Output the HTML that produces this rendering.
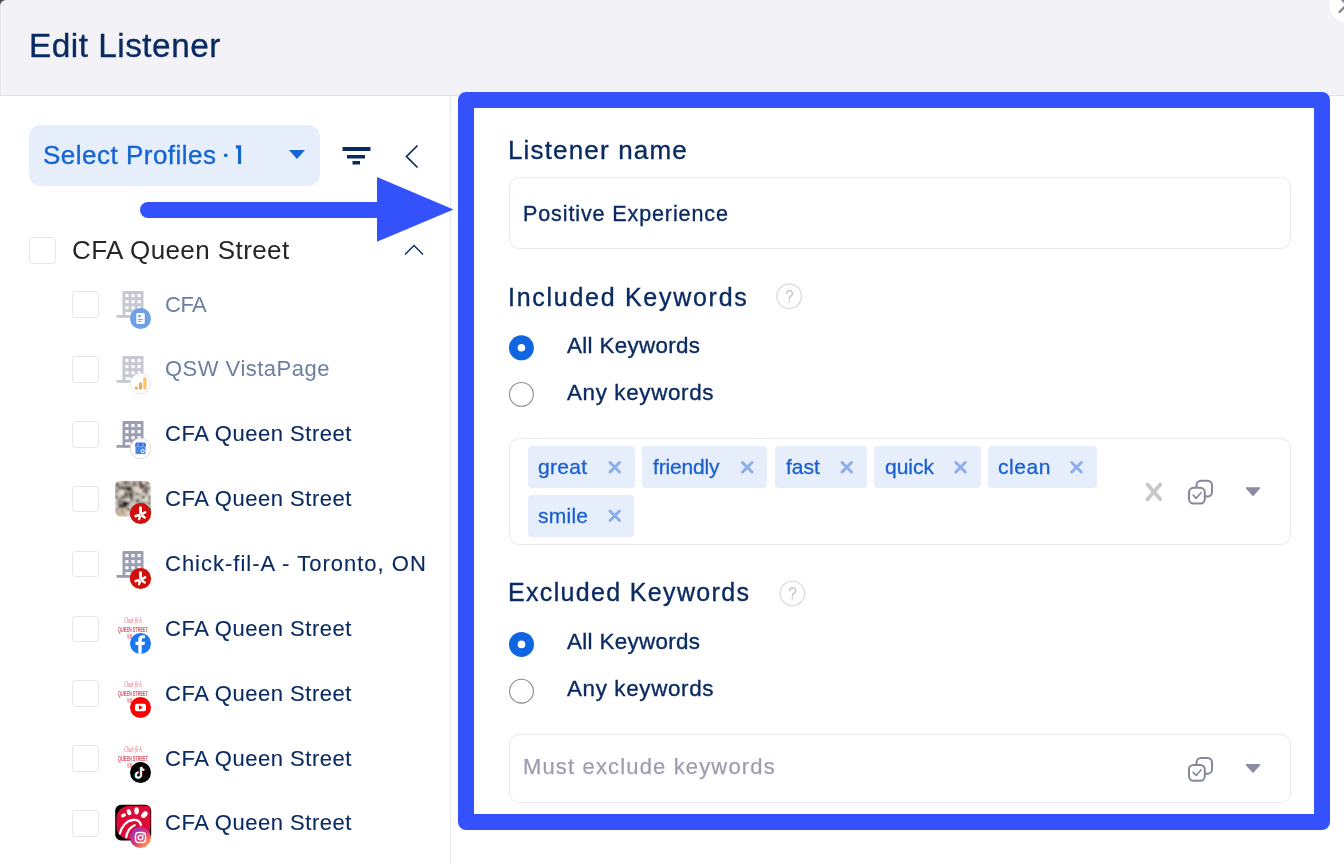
<!DOCTYPE html>
<html><head><meta charset="utf-8">
<style>
html,body{margin:0;padding:0;}
body{width:1344px;height:864px;position:relative;overflow:hidden;background:#fff;font-family:"Liberation Sans",sans-serif;}
.a{position:absolute;}
.t{position:absolute;white-space:nowrap;line-height:1;will-change:transform;}
.navy{color:#0a2b62;-webkit-text-stroke:0.35px #0a2b62;}
#hdr{left:0;top:0;width:1344px;height:95px;background:#f3f3f7;border-bottom:1px solid #e3e3e8;}
#corner{left:0;top:0;width:6px;height:6px;background:#4a4a55;}
#ledge{left:0;top:0;width:1px;height:95px;background:#e6e6ec;}
#cornerfill{left:0;top:0;width:16px;height:16px;background:#f3f3f7;border-top-left-radius:6px;}
#lpline{left:450px;top:96px;width:1px;height:768px;background:#e9e9ee;}
.cb{position:absolute;width:24.5px;height:24.5px;border:1px solid #e6e6ea;border-radius:3.5px;background:#fff;}
.field{position:absolute;border:1px solid #e9e9ed;border-radius:10px;background:#fff;}
.tag{position:absolute;height:41.5px;background:#e6eefb;border-radius:4px;}
.tagt{position:absolute;white-space:nowrap;line-height:1;will-change:transform;color:#1a5fcf;-webkit-text-stroke:0.3px #1a5fcf;}
</style></head>
<body>
<div id="hdr" class="a"></div>
<div id="corner" class="a"></div>
<div id="cornerfill" class="a"></div>
<div id="ledge" class="a" style="top:6px;height:89px;"></div>
<div class="t navy" style="left:28.5px;top:29px;font-size:33.4px;letter-spacing:0.48px;">Edit Listener</div>

<!-- close button -->
<svg class="a" style="left:1310px;top:0" width="34" height="30" viewBox="1310 0 34 30">
  <circle cx="1347" cy="5" r="17.5" fill="#fff"/>
  <path d="M1339.5 12 L1354.5 -3 M1339.5 -3 L1354.5 12" stroke="#858999" stroke-width="2.3" stroke-linecap="round"/>
</svg>

<div id="lpline" class="a"></div>

<!-- select profiles button -->
<div class="a" style="left:29px;top:125px;width:291px;height:61px;background:#e6eefb;border-radius:12px;"></div>
<div class="t" style="left:42.5px;top:142px;font-size:26px;color:#1464d2;letter-spacing:0.49px;-webkit-text-stroke:0.35px #1464d2;">Select Profiles</div><svg class="a" style="left:220px;top:140px" width="26" height="28" viewBox="220 140 26 28"><circle cx="225.75" cy="155.25" r="1.85" fill="#1464d2"/><path d="M235.9 145.2 H241.1 V164 H238 V148.4 H235.9 Z" fill="#1464d2"/></svg>
<svg class="a" style="left:289px;top:150px" width="16" height="10"><path d="M0 0H16L8 9Z" fill="#1464d2"/></svg>

<!-- filter icon -->
<svg class="a" style="left:342px;top:146px" width="30" height="20">
  <rect x="0.5" y="1" width="28" height="4" fill="#0a2b62"/>
  <rect x="5" y="9" width="18" height="3.5" fill="#0a2b62"/>
  <rect x="10.5" y="15" width="7.5" height="3.5" fill="#0a2b62"/>
</svg>
<!-- chevron left -->
<svg class="a" style="left:400px;top:140px" width="24" height="32">
  <path d="M17.5 5.5 L6.5 16.5 L17.5 27.5" fill="none" stroke="#0a2b62" stroke-width="1.7"/>
</svg>

<!-- parent row -->
<div class="cb" style="left:29px;top:237px;"></div>
<div class="t" style="left:72px;top:237px;font-size:26px;color:#26262a;letter-spacing:0.41px;">CFA Queen Street</div>
<svg class="a" style="left:400px;top:238px" width="28" height="20">
  <path d="M5 16.5 L14 7.5 L23 16.5" fill="none" stroke="#0a2b62" stroke-width="1.4"/>
</svg>

<div class="cb" style="left:72px;top:291.30px;"></div>
<svg class="a" style="left:112px;top:283.30px" width="46" height="50" viewBox="0 0 46 50"><rect x="10.5" y="8" width="21" height="26.5" rx="1" fill="#c6c8d2"/><rect x="4.5" y="32" width="27" height="2.8" fill="#c6c8d2"/><rect x="13.3" y="11.0" width="3.2" height="3.1" fill="#fff"/><rect x="19.4" y="11.0" width="3.2" height="3.1" fill="#fff"/><rect x="25.5" y="11.0" width="3.2" height="3.1" fill="#fff"/><rect x="13.3" y="17.1" width="3.2" height="3.1" fill="#fff"/><rect x="19.4" y="17.1" width="3.2" height="3.1" fill="#fff"/><rect x="25.5" y="17.1" width="3.2" height="3.1" fill="#fff"/><rect x="13.3" y="23.2" width="3.2" height="3.1" fill="#fff"/><rect x="19.4" y="23.2" width="3.2" height="3.1" fill="#fff"/><rect x="25.5" y="23.2" width="3.2" height="3.1" fill="#fff"/><rect x="13.3" y="29.2" width="5.5" height="2.8" fill="#fff"/><circle cx="28.5" cy="35.5" r="10.5" fill="#6f9fe8"/><rect x="24.3" y="29.9" width="8.4" height="11" rx="1.2" fill="#fff"/><circle cx="27.5" cy="33.1" r="1.3" fill="#6f9fe8"/><rect x="25.9" y="35.9" width="5" height="1" fill="#6f9fe8"/><rect x="25.9" y="37.9" width="3.5" height="1" fill="#6f9fe8"/></svg>
<div class="t" style="left:165px;top:293.60px;font-size:22px;color:#6c7fa2;letter-spacing:-0.5px;">CFA</div>
<div class="cb" style="left:72px;top:356.15px;"></div>
<svg class="a" style="left:112px;top:348.15px" width="46" height="50" viewBox="0 0 46 50"><rect x="10.5" y="8" width="21" height="26.5" rx="1" fill="#c6c8d2"/><rect x="4.5" y="32" width="27" height="2.8" fill="#c6c8d2"/><rect x="13.3" y="11.0" width="3.2" height="3.1" fill="#fff"/><rect x="19.4" y="11.0" width="3.2" height="3.1" fill="#fff"/><rect x="25.5" y="11.0" width="3.2" height="3.1" fill="#fff"/><rect x="13.3" y="17.1" width="3.2" height="3.1" fill="#fff"/><rect x="19.4" y="17.1" width="3.2" height="3.1" fill="#fff"/><rect x="25.5" y="17.1" width="3.2" height="3.1" fill="#fff"/><rect x="13.3" y="23.2" width="3.2" height="3.1" fill="#fff"/><rect x="19.4" y="23.2" width="3.2" height="3.1" fill="#fff"/><rect x="25.5" y="23.2" width="3.2" height="3.1" fill="#fff"/><rect x="13.3" y="29.2" width="5.5" height="2.8" fill="#fff"/><circle cx="28.5" cy="35.5" r="10.2" fill="#fff" stroke="#e4e4e8" stroke-width="1"/><circle cx="24.3" cy="40.1" r="1.6" fill="#f2a65a"/><rect x="26.9" y="34.3" width="3.2" height="7.4" rx="1.6" fill="#f2a65a"/><rect x="31.3" y="28.9" width="3.2" height="12.8" rx="1.6" fill="#f7c66a"/></svg>
<div class="t" style="left:165px;top:358.45px;font-size:22px;color:#6c7fa2;letter-spacing:0.49px;">QSW VistaPage</div>
<div class="cb" style="left:72px;top:421.00px;"></div>
<svg class="a" style="left:112px;top:413.00px" width="46" height="50" viewBox="0 0 46 50"><rect x="10.5" y="8" width="21" height="26.5" rx="1" fill="#9c9fb3"/><rect x="4.5" y="32" width="27" height="2.8" fill="#9c9fb3"/><rect x="13.3" y="11.0" width="3.2" height="3.1" fill="#fff"/><rect x="19.4" y="11.0" width="3.2" height="3.1" fill="#fff"/><rect x="25.5" y="11.0" width="3.2" height="3.1" fill="#fff"/><rect x="13.3" y="17.1" width="3.2" height="3.1" fill="#fff"/><rect x="19.4" y="17.1" width="3.2" height="3.1" fill="#fff"/><rect x="25.5" y="17.1" width="3.2" height="3.1" fill="#fff"/><rect x="13.3" y="23.2" width="3.2" height="3.1" fill="#fff"/><rect x="19.4" y="23.2" width="3.2" height="3.1" fill="#fff"/><rect x="25.5" y="23.2" width="3.2" height="3.1" fill="#fff"/><rect x="13.3" y="29.2" width="5.5" height="2.8" fill="#fff"/><circle cx="28.5" cy="35.5" r="10.2" fill="#fff" stroke="#dcdce2" stroke-width="1"/><path d="M23.0 32.0 L24.0 29.5 H33.0 L34.0 32.0 V33.5 H23.0Z" fill="#3b6fd8"/><rect x="23.5" y="33.5" width="10" height="7.5" fill="#4a86e8"/><path d="M26.0 29.5 V33.5 M31.0 29.5 V33.5" stroke="#8fb4f2" stroke-width="1"/><circle cx="30.7" cy="38.1" r="1.6" fill="none" stroke="#fff" stroke-width="1"/></svg>
<div class="t" style="left:165px;top:423.30px;font-size:22px;color:#0a2b62;letter-spacing:0.52px;-webkit-text-stroke:0.12px #0a2b62;">CFA Queen Street</div>
<div class="cb" style="left:72px;top:485.85px;"></div>
<svg class="a" style="left:112px;top:477.85px" width="46" height="50" viewBox="0 0 46 50"><defs><clipPath id="pc"><rect x="3" y="2.8" width="36" height="36" rx="6"/></clipPath><filter id="pb" x="0" y="0" width="1" height="1"><feGaussianBlur stdDeviation="0.8"/></filter></defs><g clip-path="url(#pc)"><g filter="url(#pb)"><rect x="3" y="2.8" width="36" height="36" fill="#9d958a"/><rect x="3.0" y="2.8" width="3.05" height="3.05" fill="#3a3632"/><rect x="6.0" y="2.8" width="3.05" height="3.05" fill="#d8d2ca"/><rect x="9.0" y="2.8" width="3.05" height="3.05" fill="#a8a095"/><rect x="12.0" y="2.8" width="3.05" height="3.05" fill="#575048"/><rect x="15.0" y="2.8" width="3.05" height="3.05" fill="#9a9184"/><rect x="18.0" y="2.8" width="3.05" height="3.05" fill="#b8b0a4"/><rect x="21.0" y="2.8" width="3.05" height="3.05" fill="#827a70"/><rect x="24.0" y="2.8" width="3.05" height="3.05" fill="#b8b0a4"/><rect x="27.0" y="2.8" width="3.05" height="3.05" fill="#3a3632"/><rect x="30.0" y="2.8" width="3.05" height="3.05" fill="#e3ddd4"/><rect x="33.0" y="2.8" width="3.05" height="3.05" fill="#9a9184"/><rect x="36.0" y="2.8" width="3.05" height="3.05" fill="#827a70"/><rect x="3.0" y="5.8" width="3.05" height="3.05" fill="#6e675e"/><rect x="6.0" y="5.8" width="3.05" height="3.05" fill="#9a9184"/><rect x="9.0" y="5.8" width="3.05" height="3.05" fill="#b8b0a4"/><rect x="12.0" y="5.8" width="3.05" height="3.05" fill="#a8a095"/><rect x="15.0" y="5.8" width="3.05" height="3.05" fill="#a8a095"/><rect x="18.0" y="5.8" width="3.05" height="3.05" fill="#b8b0a4"/><rect x="21.0" y="5.8" width="3.05" height="3.05" fill="#6e675e"/><rect x="24.0" y="5.8" width="3.05" height="3.05" fill="#b8b0a4"/><rect x="27.0" y="5.8" width="3.05" height="3.05" fill="#827a70"/><rect x="30.0" y="5.8" width="3.05" height="3.05" fill="#a8a095"/><rect x="33.0" y="5.8" width="3.05" height="3.05" fill="#9a9184"/><rect x="36.0" y="5.8" width="3.05" height="3.05" fill="#e3ddd4"/><rect x="3.0" y="8.8" width="3.05" height="3.05" fill="#b8b0a4"/><rect x="6.0" y="8.8" width="3.05" height="3.05" fill="#6e675e"/><rect x="9.0" y="8.8" width="3.05" height="3.05" fill="#575048"/><rect x="12.0" y="8.8" width="3.05" height="3.05" fill="#575048"/><rect x="15.0" y="8.8" width="3.05" height="3.05" fill="#e3ddd4"/><rect x="18.0" y="8.8" width="3.05" height="3.05" fill="#9a9184"/><rect x="21.0" y="8.8" width="3.05" height="3.05" fill="#e3ddd4"/><rect x="24.0" y="8.8" width="3.05" height="3.05" fill="#e3ddd4"/><rect x="27.0" y="8.8" width="3.05" height="3.05" fill="#a8a095"/><rect x="30.0" y="8.8" width="3.05" height="3.05" fill="#9a9184"/><rect x="33.0" y="8.8" width="3.05" height="3.05" fill="#6e675e"/><rect x="36.0" y="8.8" width="3.05" height="3.05" fill="#9a9184"/><rect x="3.0" y="11.8" width="3.05" height="3.05" fill="#827a70"/><rect x="6.0" y="11.8" width="3.05" height="3.05" fill="#d8d2ca"/><rect x="9.0" y="11.8" width="3.05" height="3.05" fill="#f0ece6"/><rect x="12.0" y="11.8" width="3.05" height="3.05" fill="#a8a095"/><rect x="15.0" y="11.8" width="3.05" height="3.05" fill="#d8d2ca"/><rect x="18.0" y="11.8" width="3.05" height="3.05" fill="#827a70"/><rect x="21.0" y="11.8" width="3.05" height="3.05" fill="#b8b0a4"/><rect x="24.0" y="11.8" width="3.05" height="3.05" fill="#e3ddd4"/><rect x="27.0" y="11.8" width="3.05" height="3.05" fill="#f0ece6"/><rect x="30.0" y="11.8" width="3.05" height="3.05" fill="#827a70"/><rect x="33.0" y="11.8" width="3.05" height="3.05" fill="#575048"/><rect x="36.0" y="11.8" width="3.05" height="3.05" fill="#d8d2ca"/><rect x="3.0" y="14.8" width="3.05" height="3.05" fill="#b8b0a4"/><rect x="6.0" y="14.8" width="3.05" height="3.05" fill="#e3ddd4"/><rect x="9.0" y="14.8" width="3.05" height="3.05" fill="#e3ddd4"/><rect x="12.0" y="14.8" width="3.05" height="3.05" fill="#575048"/><rect x="15.0" y="14.8" width="3.05" height="3.05" fill="#6e675e"/><rect x="18.0" y="14.8" width="3.05" height="3.05" fill="#3a3632"/><rect x="21.0" y="14.8" width="3.05" height="3.05" fill="#b8b0a4"/><rect x="24.0" y="14.8" width="3.05" height="3.05" fill="#827a70"/><rect x="27.0" y="14.8" width="3.05" height="3.05" fill="#b8b0a4"/><rect x="30.0" y="14.8" width="3.05" height="3.05" fill="#e3ddd4"/><rect x="33.0" y="14.8" width="3.05" height="3.05" fill="#9a9184"/><rect x="36.0" y="14.8" width="3.05" height="3.05" fill="#e3ddd4"/><rect x="3.0" y="17.8" width="3.05" height="3.05" fill="#6e675e"/><rect x="6.0" y="17.8" width="3.05" height="3.05" fill="#c9c1b5"/><rect x="9.0" y="17.8" width="3.05" height="3.05" fill="#575048"/><rect x="12.0" y="17.8" width="3.05" height="3.05" fill="#827a70"/><rect x="15.0" y="17.8" width="3.05" height="3.05" fill="#a8a095"/><rect x="18.0" y="17.8" width="3.05" height="3.05" fill="#3a3632"/><rect x="21.0" y="17.8" width="3.05" height="3.05" fill="#c9c1b5"/><rect x="24.0" y="17.8" width="3.05" height="3.05" fill="#e3ddd4"/><rect x="27.0" y="17.8" width="3.05" height="3.05" fill="#c9c1b5"/><rect x="30.0" y="17.8" width="3.05" height="3.05" fill="#3a3632"/><rect x="33.0" y="17.8" width="3.05" height="3.05" fill="#f0ece6"/><rect x="36.0" y="17.8" width="3.05" height="3.05" fill="#6e675e"/><rect x="3.0" y="20.8" width="3.05" height="3.05" fill="#d8d2ca"/><rect x="6.0" y="20.8" width="3.05" height="3.05" fill="#6e675e"/><rect x="9.0" y="20.8" width="3.05" height="3.05" fill="#b8b0a4"/><rect x="12.0" y="20.8" width="3.05" height="3.05" fill="#e3ddd4"/><rect x="15.0" y="20.8" width="3.05" height="3.05" fill="#f0ece6"/><rect x="18.0" y="20.8" width="3.05" height="3.05" fill="#827a70"/><rect x="21.0" y="20.8" width="3.05" height="3.05" fill="#c9c1b5"/><rect x="24.0" y="20.8" width="3.05" height="3.05" fill="#3a3632"/><rect x="27.0" y="20.8" width="3.05" height="3.05" fill="#c9c1b5"/><rect x="30.0" y="20.8" width="3.05" height="3.05" fill="#f0ece6"/><rect x="33.0" y="20.8" width="3.05" height="3.05" fill="#e3ddd4"/><rect x="36.0" y="20.8" width="3.05" height="3.05" fill="#b8b0a4"/><rect x="3.0" y="23.8" width="3.05" height="3.05" fill="#b8b0a4"/><rect x="6.0" y="23.8" width="3.05" height="3.05" fill="#827a70"/><rect x="9.0" y="23.8" width="3.05" height="3.05" fill="#a8a095"/><rect x="12.0" y="23.8" width="3.05" height="3.05" fill="#d8d2ca"/><rect x="15.0" y="23.8" width="3.05" height="3.05" fill="#3a3632"/><rect x="18.0" y="23.8" width="3.05" height="3.05" fill="#d8d2ca"/><rect x="21.0" y="23.8" width="3.05" height="3.05" fill="#c9c1b5"/><rect x="24.0" y="23.8" width="3.05" height="3.05" fill="#a8a095"/><rect x="27.0" y="23.8" width="3.05" height="3.05" fill="#9a9184"/><rect x="30.0" y="23.8" width="3.05" height="3.05" fill="#575048"/><rect x="33.0" y="23.8" width="3.05" height="3.05" fill="#b8b0a4"/><rect x="36.0" y="23.8" width="3.05" height="3.05" fill="#827a70"/><rect x="3.0" y="26.8" width="3.05" height="3.05" fill="#e3ddd4"/><rect x="6.0" y="26.8" width="3.05" height="3.05" fill="#3a3632"/><rect x="9.0" y="26.8" width="3.05" height="3.05" fill="#3a3632"/><rect x="12.0" y="26.8" width="3.05" height="3.05" fill="#3a3632"/><rect x="15.0" y="26.8" width="3.05" height="3.05" fill="#e3ddd4"/><rect x="18.0" y="26.8" width="3.05" height="3.05" fill="#c9c1b5"/><rect x="21.0" y="26.8" width="3.05" height="3.05" fill="#e3ddd4"/><rect x="24.0" y="26.8" width="3.05" height="3.05" fill="#c9c1b5"/><rect x="27.0" y="26.8" width="3.05" height="3.05" fill="#b8b0a4"/><rect x="30.0" y="26.8" width="3.05" height="3.05" fill="#b8b0a4"/><rect x="33.0" y="26.8" width="3.05" height="3.05" fill="#f0ece6"/><rect x="36.0" y="26.8" width="3.05" height="3.05" fill="#c9c1b5"/><rect x="3.0" y="29.8" width="3.05" height="3.05" fill="#575048"/><rect x="6.0" y="29.8" width="3.05" height="3.05" fill="#b8b0a4"/><rect x="9.0" y="29.8" width="3.05" height="3.05" fill="#9a9184"/><rect x="12.0" y="29.8" width="3.05" height="3.05" fill="#f0ece6"/><rect x="15.0" y="29.8" width="3.05" height="3.05" fill="#575048"/><rect x="18.0" y="29.8" width="3.05" height="3.05" fill="#e3ddd4"/><rect x="21.0" y="29.8" width="3.05" height="3.05" fill="#575048"/><rect x="24.0" y="29.8" width="3.05" height="3.05" fill="#c9c1b5"/><rect x="27.0" y="29.8" width="3.05" height="3.05" fill="#f0ece6"/><rect x="30.0" y="29.8" width="3.05" height="3.05" fill="#a8a095"/><rect x="33.0" y="29.8" width="3.05" height="3.05" fill="#575048"/><rect x="36.0" y="29.8" width="3.05" height="3.05" fill="#3a3632"/><rect x="3.0" y="32.8" width="3.05" height="3.05" fill="#9a9184"/><rect x="6.0" y="32.8" width="3.05" height="3.05" fill="#c9c1b5"/><rect x="9.0" y="32.8" width="3.05" height="3.05" fill="#3a3632"/><rect x="12.0" y="32.8" width="3.05" height="3.05" fill="#d8d2ca"/><rect x="15.0" y="32.8" width="3.05" height="3.05" fill="#e3ddd4"/><rect x="18.0" y="32.8" width="3.05" height="3.05" fill="#b8b0a4"/><rect x="21.0" y="32.8" width="3.05" height="3.05" fill="#c9c1b5"/><rect x="24.0" y="32.8" width="3.05" height="3.05" fill="#9a9184"/><rect x="27.0" y="32.8" width="3.05" height="3.05" fill="#6e675e"/><rect x="30.0" y="32.8" width="3.05" height="3.05" fill="#f0ece6"/><rect x="33.0" y="32.8" width="3.05" height="3.05" fill="#d8d2ca"/><rect x="36.0" y="32.8" width="3.05" height="3.05" fill="#6e675e"/><rect x="3.0" y="35.8" width="3.05" height="3.05" fill="#a8a095"/><rect x="6.0" y="35.8" width="3.05" height="3.05" fill="#a8a095"/><rect x="9.0" y="35.8" width="3.05" height="3.05" fill="#c9c1b5"/><rect x="12.0" y="35.8" width="3.05" height="3.05" fill="#b8b0a4"/><rect x="15.0" y="35.8" width="3.05" height="3.05" fill="#d8d2ca"/><rect x="18.0" y="35.8" width="3.05" height="3.05" fill="#c9c1b5"/><rect x="21.0" y="35.8" width="3.05" height="3.05" fill="#a8a095"/><rect x="24.0" y="35.8" width="3.05" height="3.05" fill="#827a70"/><rect x="27.0" y="35.8" width="3.05" height="3.05" fill="#f0ece6"/><rect x="30.0" y="35.8" width="3.05" height="3.05" fill="#d8d2ca"/><rect x="33.0" y="35.8" width="3.05" height="3.05" fill="#a8a095"/><rect x="36.0" y="35.8" width="3.05" height="3.05" fill="#827a70"/><circle cx="13" cy="26" r="3.2" fill="#2e2b28"/><circle cx="17" cy="11" r="2.5" fill="#2e2b28"/><circle cx="30" cy="8" r="2.3" fill="#6a2a2a"/><rect x="3" y="30" width="12" height="9" fill="#cbbd9e" opacity="0.7"/></g></g><circle cx="28.5" cy="35.5" r="10.6" fill="#d0100c"/><line x1="28.64" y1="35.10" x2="28.46" y2="29.70" stroke="#fff" stroke-width="2.9" stroke-linecap="round"/><line x1="26.96" y1="37.17" x2="23.68" y2="38.05" stroke="#fff" stroke-width="2.6" stroke-linecap="round"/><line x1="28.08" y1="38.39" x2="27.06" y2="41.21" stroke="#fff" stroke-width="2.4" stroke-linecap="round"/><line x1="30.29" y1="35.85" x2="33.11" y2="34.35" stroke="#fff" stroke-width="2.6" stroke-linecap="round"/><line x1="30.17" y1="37.73" x2="32.63" y2="39.45" stroke="#fff" stroke-width="2.4" stroke-linecap="round"/></svg>
<div class="t" style="left:165px;top:488.15px;font-size:22px;color:#0a2b62;letter-spacing:0.52px;-webkit-text-stroke:0.12px #0a2b62;">CFA Queen Street</div>
<div class="cb" style="left:72px;top:550.70px;"></div>
<svg class="a" style="left:112px;top:542.70px" width="46" height="50" viewBox="0 0 46 50"><rect x="10.5" y="8" width="21" height="26.5" rx="1" fill="#9c9fb3"/><rect x="4.5" y="32" width="27" height="2.8" fill="#9c9fb3"/><rect x="13.3" y="11.0" width="3.2" height="3.1" fill="#fff"/><rect x="19.4" y="11.0" width="3.2" height="3.1" fill="#fff"/><rect x="25.5" y="11.0" width="3.2" height="3.1" fill="#fff"/><rect x="13.3" y="17.1" width="3.2" height="3.1" fill="#fff"/><rect x="19.4" y="17.1" width="3.2" height="3.1" fill="#fff"/><rect x="25.5" y="17.1" width="3.2" height="3.1" fill="#fff"/><rect x="13.3" y="23.2" width="3.2" height="3.1" fill="#fff"/><rect x="19.4" y="23.2" width="3.2" height="3.1" fill="#fff"/><rect x="25.5" y="23.2" width="3.2" height="3.1" fill="#fff"/><rect x="13.3" y="29.2" width="5.5" height="2.8" fill="#fff"/><circle cx="28.5" cy="35.5" r="10.6" fill="#d0100c"/><line x1="28.64" y1="35.10" x2="28.46" y2="29.70" stroke="#fff" stroke-width="2.9" stroke-linecap="round"/><line x1="26.96" y1="37.17" x2="23.68" y2="38.05" stroke="#fff" stroke-width="2.6" stroke-linecap="round"/><line x1="28.08" y1="38.39" x2="27.06" y2="41.21" stroke="#fff" stroke-width="2.4" stroke-linecap="round"/><line x1="30.29" y1="35.85" x2="33.11" y2="34.35" stroke="#fff" stroke-width="2.6" stroke-linecap="round"/><line x1="30.17" y1="37.73" x2="32.63" y2="39.45" stroke="#fff" stroke-width="2.4" stroke-linecap="round"/></svg>
<div class="t" style="left:165px;top:553.00px;font-size:22px;color:#0a2b62;letter-spacing:1.0px;-webkit-text-stroke:0.12px #0a2b62;">Chick-fil-A - Toronto, ON</div>
<div class="cb" style="left:72px;top:615.55px;"></div>
<svg class="a" style="left:112px;top:607.55px" width="46" height="50" viewBox="0 0 46 50"><g fill="#e0485a"><text x="12.2" y="15.4" font-family="Liberation Serif" font-style="italic" font-size="7.5" textLength="17.4" lengthAdjust="spacingAndGlyphs" opacity="0.85">Chick-fil-A</text><text x="6.1" y="24.3" font-family="Liberation Sans" font-weight="bold" font-size="7.8" textLength="29.8" lengthAdjust="spacingAndGlyphs" opacity="0.95">QUEEN STREET</text><text x="15.1" y="30.6" font-family="Liberation Sans" font-weight="bold" font-size="6.5" textLength="5.2" lengthAdjust="spacingAndGlyphs" opacity="0.8">VIII</text></g><circle cx="28.5" cy="35.5" r="10.5" fill="#1877f2"/><path d="M29.7 45.8 V37.0 H32.5 L32.9 33.7 H29.7 V31.9 C29.7 30.9 30.1 30.3 31.4 30.3 H33.0 V27.4 C32.6 27.3 31.7 27.2 30.7 27.2 C28.1 27.2 26.3 28.8 26.3 31.6 V33.7 H23.5 V37.0 H26.3 V45.8Z" fill="#fff"/></svg>
<div class="t" style="left:165px;top:617.85px;font-size:22px;color:#0a2b62;letter-spacing:0.52px;-webkit-text-stroke:0.12px #0a2b62;">CFA Queen Street</div>
<div class="cb" style="left:72px;top:680.40px;"></div>
<svg class="a" style="left:112px;top:672.40px" width="46" height="50" viewBox="0 0 46 50"><g fill="#e0485a"><text x="12.2" y="15.4" font-family="Liberation Serif" font-style="italic" font-size="7.5" textLength="17.4" lengthAdjust="spacingAndGlyphs" opacity="0.85">Chick-fil-A</text><text x="6.1" y="24.3" font-family="Liberation Sans" font-weight="bold" font-size="7.8" textLength="29.8" lengthAdjust="spacingAndGlyphs" opacity="0.95">QUEEN STREET</text><text x="15.1" y="30.6" font-family="Liberation Sans" font-weight="bold" font-size="6.5" textLength="5.2" lengthAdjust="spacingAndGlyphs" opacity="0.8">VIII</text></g><circle cx="28.5" cy="35.5" r="10.5" fill="#f00"/><rect x="23.0" y="31.7" width="11" height="7.6" rx="2" fill="#fff"/><path d="M26.9 33.3 L30.9 35.5 L26.9 37.7Z" fill="#f00"/></svg>
<div class="t" style="left:165px;top:682.70px;font-size:22px;color:#0a2b62;letter-spacing:0.52px;-webkit-text-stroke:0.12px #0a2b62;">CFA Queen Street</div>
<div class="cb" style="left:72px;top:745.25px;"></div>
<svg class="a" style="left:112px;top:737.25px" width="46" height="50" viewBox="0 0 46 50"><g fill="#e0485a"><text x="12.2" y="15.4" font-family="Liberation Serif" font-style="italic" font-size="7.5" textLength="17.4" lengthAdjust="spacingAndGlyphs" opacity="0.85">Chick-fil-A</text><text x="6.1" y="24.3" font-family="Liberation Sans" font-weight="bold" font-size="7.8" textLength="29.8" lengthAdjust="spacingAndGlyphs" opacity="0.95">QUEEN STREET</text><text x="15.1" y="30.6" font-family="Liberation Sans" font-weight="bold" font-size="6.5" textLength="5.2" lengthAdjust="spacingAndGlyphs" opacity="0.8">VIII</text></g><circle cx="28.5" cy="35.5" r="10.5" fill="#000"/><path d="M29.1 30.0 V38.0 A2.6 2.6 0 1 1 26.5 35.4 M29.1 30.0 C29.5 32.0 30.7 32.9 32.3 33.0" fill="none" stroke="#25f4ee" stroke-width="1.6" transform="translate(-0.6,0.4)"/><path d="M29.1 30.0 V38.0 A2.6 2.6 0 1 1 26.5 35.4 M29.1 30.0 C29.5 32.0 30.7 32.9 32.3 33.0" fill="none" stroke="#fe2c55" stroke-width="1.6" transform="translate(0.5,-0.3)"/><path d="M29.1 30.0 V38.0 A2.6 2.6 0 1 1 26.5 35.4 M29.1 30.0 C29.5 32.0 30.7 32.9 32.3 33.0" fill="none" stroke="#fff" stroke-width="1.6"/></svg>
<div class="t" style="left:165px;top:747.55px;font-size:22px;color:#0a2b62;letter-spacing:0.52px;-webkit-text-stroke:0.12px #0a2b62;">CFA Queen Street</div>
<div class="cb" style="left:72px;top:810.10px;"></div>
<svg class="a" style="left:112px;top:802.10px" width="46" height="50" viewBox="0 0 46 50"><rect x="3.2" y="2.8" width="36" height="35.8" rx="6" fill="#000"/><rect x="4.4" y="3.8" width="34" height="33.5" rx="13" fill="#dd0a35"/><rect x="20" y="3.8" width="18.4" height="18" rx="4" fill="#dd0a35"/><g fill="#fff"><ellipse cx="11.5" cy="13.4" rx="2.6" ry="1.9" transform="rotate(-25 11.5 13.4)"/><ellipse cx="17" cy="10.2" rx="2.1" ry="3.2" transform="rotate(-20 17 10.2)"/><ellipse cx="24.6" cy="8.8" rx="2.3" ry="3.6"/><ellipse cx="32.4" cy="12.6" rx="2.6" ry="3.8" transform="rotate(40 32.4 12.6)"/></g><g fill="none" stroke="#fff" stroke-width="2.3" stroke-linecap="round"><path d="M7.8 31.5 C10 24 15 18.5 21 18 C25 17.6 28 19.5 29 23"/><path d="M14.2 35.2 C15 30 18 25 22.6 23.2"/></g><defs><linearGradient id="igg" x1="0.1" y1="0.1" x2="0.9" y2="0.95"><stop offset="0" stop-color="#8a3ad0"/><stop offset="0.5" stop-color="#e1306c"/><stop offset="1" stop-color="#fdb54a"/></linearGradient></defs><circle cx="28.5" cy="35.5" r="10.5" fill="url(#igg)"/><rect x="23.5" y="30.5" width="10" height="10" rx="3" fill="none" stroke="#fff" stroke-width="1.5"/><circle cx="28.5" cy="35.5" r="2.3" fill="none" stroke="#fff" stroke-width="1.5"/><circle cx="31.3" cy="32.7" r="0.8" fill="#fff"/></svg>
<div class="t" style="left:165px;top:812.40px;font-size:22px;color:#0a2b62;letter-spacing:0.52px;-webkit-text-stroke:0.12px #0a2b62;">CFA Queen Street</div>
<!-- blue highlight -->
<div class="a" style="left:458px;top:92px;width:840px;height:706px;border:16px solid #3452fb;border-radius:8px;"></div>

<div class="t navy" style="left:508px;top:137px;font-size:26px;letter-spacing:1.16px;">Listener name</div>
<div class="field" style="left:509px;top:177px;width:780px;height:70px;"></div>
<div class="t navy" style="left:523px;top:204px;font-size:21.5px;letter-spacing:0.89px;">Positive Experience</div>

<div class="t navy" style="left:507.5px;top:285px;font-size:25px;letter-spacing:1.72px;">Included Keywords</div>
<svg class="a" style="left:775px;top:282px" width="29" height="29" viewBox="775 282 29 29">
  <circle cx="789.2" cy="296.3" r="12.3" fill="#fff" stroke="#dadce3" stroke-width="1.4"/>
  <path d="M786.6 293.6 A2.9 2.9 0 1 1 791 296 C789.9 296.6 789.3 297.2 789.3 298.4 V298.9" fill="none" stroke="#c4c6ce" stroke-width="1.45" stroke-linecap="round"/><circle cx="789.3" cy="301.4" r="0.95" fill="#c4c6ce"/>
</svg>
<svg class="a" style="left:506px;top:332px" width="32" height="80" viewBox="506 332 32 80">
  <circle cx="521.4" cy="347.8" r="12.5" fill="#0f66e0"/>
  <circle cx="521.4" cy="347.8" r="3.8" fill="#fff"/>
  <circle cx="521.4" cy="394.4" r="11.9" fill="#fff" stroke="#8a8a8a" stroke-width="1.1"/>
</svg>
<div class="t navy" style="left:567.4px;top:335px;font-size:22.4px;letter-spacing:0.33px;">All Keywords</div>
<div class="t navy" style="left:567px;top:382px;font-size:22.4px;letter-spacing:0.64px;">Any keywords</div>

<div class="field" style="left:509px;top:438px;width:780px;height:105px;"></div>
<div class="tag" style="left:528px;top:446px;width:107px;"></div>
<div class="tag" style="left:642px;top:446px;width:125px;"></div>
<div class="tag" style="left:775px;top:446px;width:92px;"></div>
<div class="tag" style="left:874px;top:446px;width:107px;"></div>
<div class="tag" style="left:988px;top:446px;width:109px;"></div>
<div class="tag" style="left:528px;top:495px;width:106px;"></div>
<div class="tagt" style="left:538px;top:455.5px;font-size:21px;letter-spacing:0.3px;">great</div>
<div class="tagt" style="left:653px;top:455.5px;font-size:21px;letter-spacing:-0.17px;">friendly</div>
<div class="tagt" style="left:785.7px;top:455.5px;font-size:21px;">fast</div>
<div class="tagt" style="left:884.5px;top:455.5px;font-size:21px;">quick</div>
<div class="tagt" style="left:998px;top:455.5px;font-size:21px;letter-spacing:0.57px;">clean</div>
<div class="tagt" style="left:538px;top:504.5px;font-size:21px;letter-spacing:0.25px;">smile</div>
<svg class="a" style="left:0;top:0" width="1344" height="864" viewBox="0 0 1344 864">
  <g stroke="#8caeea" stroke-width="3" stroke-linecap="round">
    <path d="M610 462.5 L619.5 472 M619.5 462.5 L610 472"/>
    <path d="M742.5 462.5 L752 472 M752 462.5 L742.5 472"/>
    <path d="M842 462.5 L851.5 472 M851.5 462.5 L842 472"/>
    <path d="M955.8 462.5 L965.3 472 M965.3 462.5 L955.8 472"/>
    <path d="M1071.8 462.5 L1081.3 472 M1081.3 462.5 L1071.8 472"/>
    <path d="M610 511 L619.5 520.5 M619.5 511 L610 520.5"/>
  </g>
  <path d="M1147.5 484.5 L1160.3 499.3 M1160.3 484.5 L1147.5 499.3" stroke="#c8c8cc" stroke-width="3.8" stroke-linecap="round"/>
  <g fill="#fff" stroke="#85879a" stroke-width="2">
    <rect x="1196.5" y="480.7" width="15.5" height="15.8" rx="4.5"/>
    <rect x="1189" y="487.8" width="15.8" height="15.8" rx="4.5"/>
    <path d="M1193.2 495.2 L1196.2 498.3 L1201 492.8" fill="none" stroke-width="1.7" stroke-linecap="round" stroke-linejoin="round"/>
  </g>
  <path d="M1246.5 488 H1259.5 L1253 495.2Z" fill="#8b8da3" stroke="#8b8da3" stroke-width="1.6" stroke-linejoin="round"/>
</svg>

<div class="t navy" style="left:507.5px;top:580px;font-size:25px;letter-spacing:1.34px;">Excluded Keywords</div>
<svg class="a" style="left:778px;top:579px" width="29" height="29" viewBox="778 579 29 29">
  <circle cx="792.4" cy="593.4" r="12.3" fill="#fff" stroke="#dadce3" stroke-width="1.4"/>
  <path d="M789.8 590.7 A2.9 2.9 0 1 1 794.2 593.1 C793.1 593.7 792.5 594.3 792.5 595.5 V596" fill="none" stroke="#c4c6ce" stroke-width="1.45" stroke-linecap="round"/><circle cx="792.5" cy="598.5" r="0.95" fill="#c4c6ce"/>
</svg>
<svg class="a" style="left:506px;top:628px" width="32" height="80" viewBox="506 628 32 80">
  <circle cx="521.5" cy="644.4" r="12.5" fill="#0f66e0"/>
  <circle cx="521.5" cy="644.4" r="3.8" fill="#fff"/>
  <circle cx="521.5" cy="691.2" r="11.9" fill="#fff" stroke="#8a8a8a" stroke-width="1.1"/>
</svg>
<div class="t navy" style="left:567.4px;top:631px;font-size:22.4px;letter-spacing:0.33px;">All Keywords</div>
<div class="t navy" style="left:567px;top:678px;font-size:22.4px;letter-spacing:0.64px;">Any keywords</div>

<div class="field" style="left:509px;top:734px;width:780px;height:67px;"></div>
<div class="t" style="left:522.5px;top:756px;font-size:22px;color:#9b9db0;letter-spacing:1.15px;-webkit-text-stroke:0.25px #9b9db0;">Must exclude keywords</div>
<svg class="a" style="left:0;top:0" width="1344" height="864" viewBox="0 0 1344 864">
  <g fill="#fff" stroke="#85879a" stroke-width="2">
    <rect x="1196.5" y="757.9" width="15.5" height="15.8" rx="4.5"/>
    <rect x="1189" y="765" width="15.8" height="15.8" rx="4.5"/>
    <path d="M1193.2 772.4 L1196.2 775.5 L1201 770" fill="none" stroke-width="1.7" stroke-linecap="round" stroke-linejoin="round"/>
  </g>
  <path d="M1246.5 764.7 H1259.5 L1253 771.9Z" fill="#8b8da3" stroke="#8b8da3" stroke-width="1.6" stroke-linejoin="round"/>
</svg>

<!-- arrow -->
<svg class="a" style="left:0;top:0" width="1344" height="864" viewBox="0 0 1344 864">
  <path d="M148 202 H380 V218 H148 A8 8 0 0 1 148 202Z" fill="#3452fb"/>
  <path d="M377 177 L453.5 209.5 L377 241.8Z" fill="#3452fb"/>
</svg>

</body></html>
